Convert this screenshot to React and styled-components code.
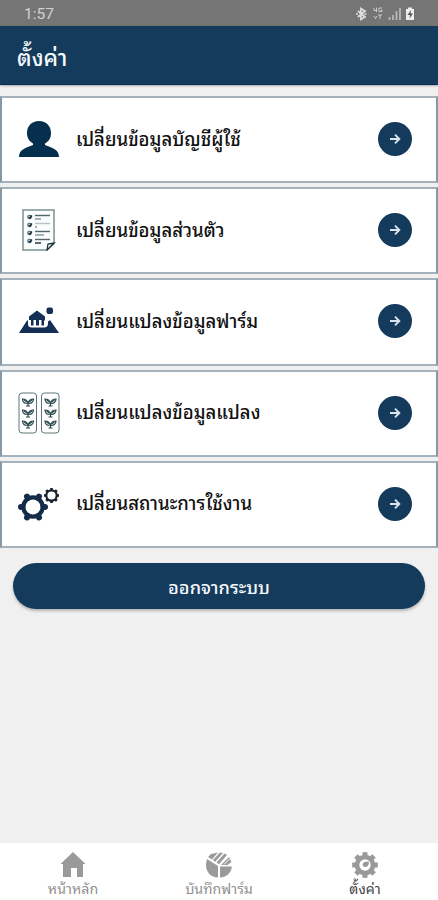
import React from 'react';
import styled, { createGlobalStyle } from 'styled-components';

const GlobalStyle = createGlobalStyle`
* {
    box-sizing: border-box;
}
body {
    margin: 0;
    background: #f0f0f0;
    font-family: Roboto, "Noto Sans Thai Looped", "Noto Looped Thai", Loma, Waree, Garuda, "Noto Sans Thai", "Noto Sans", sans-serif;
}
button {
    font-family: inherit;
    border: 0;
    padding: 0;
}
`

const UserIcon = () => (
    <svg width="42" height="42" viewBox="0 0 42 42" fill="#052f4d">
        <path d="M21 3C13.500 3 9 8 9 15c0 5 2 8 6 10.500v1.500C8 30 1 31 1 39h40c0-8-7-9-14-12v-1.500c4-2.500 6-5.500 6-10.500 0-7-4.500-12-12-12z" />
    </svg>
)

const ListIcon = () => (
    <svg width="42" height="42" viewBox="0 0 42 42" fill="none" stroke="#7b9292">
        <path d="M5 1h31v34l-7 6H5z" strokeWidth="1.5" fill="#fbfdfd" />
        <path d="M29 41l1-6 6-1z" fill="#fff" stroke="#173540" strokeWidth="1.3" />
        {[8, 16, 24, 32].map(y => (
            <g key={y}>
                <circle cx="11.500" cy={y} r="1.700" stroke="#566b76" strokeWidth="1.3" />
                <path d={`M11 ${y}l1 1 2-2.5`} stroke="#102c3e" strokeWidth="1.3" />
                <path d={`M17 ${y - 1.5}h15`} stroke={y === 16 ? '#b7c2c2' : '#52676b'} strokeWidth="1.4" />
                <path d={`M17 ${y + 2}h${y === 16 ? 2 : y === 24 ? 9 : 6}`} stroke={y === 32 ? '#102c3e' : '#7b9292'} strokeWidth="1.4" />
            </g>
        ))}
    </svg>
)

const FarmIcon = () => (
    <svg width="42" height="42" viewBox="0 0 42 42" fill="#142f56">
        <path d="M1 33l8-12.500h1v3.500q0 3.500 4 3.500h12q4 0 4-4v-2l2-1.500 9 13z" />
        <path d="M11 20v-3.500l8-6 8 6V20l-1 1v4.500h-2.500V20H21v5.500h-3V20h-2.500v5.500H13V20z" />
        <rect x="28.500" y="7.500" width="6.500" height="6.500" rx="2" />
    </svg>
)

const PlotIcon = () => (
    <svg width="42" height="42" viewBox="0 0 42 42" fill="none" stroke="#5c7477">
        {[1, 23.5].map(x => (
            <g key={x} transform={`translate(${x} 0)`}>
                <rect x="0" y="1" width="17.5" height="40" rx="3" />
                {[8, 19, 30].map(y => (
                    <g key={y} transform={`translate(9 ${y})`} stroke="#29484d" strokeWidth="1.2">
                        <path d="M0 6V3C-1 0-3-1-5.500-1c0 3 2 5 5.500 4C1 0 3-1 5.500-1 5.500 2 3 4 0 3M-2 6h4" />
                        <path d="M-4 0l3 2M4 0L1 2" />
                    </g>
                ))}
            </g>
        ))}
    </svg>
)

const teeth = (count) => Array.from({ length: count }, (_, i) => i * 360 / count)

const GearsIcon = () => (
    <svg width="42" height="42" viewBox="0 0 42 42" fill="none">
        <g transform="translate(15 24)" stroke="#132c49">
            <circle r="9.700" strokeWidth="4.200" />
            {teeth(6).map(a => <path key={a} d="M10.500 0h1.500" transform={`rotate(${a})`} strokeWidth="6" strokeLinecap="round" />)}
        </g>
        <g transform="translate(33.500 12.500)" stroke="#17222e">
            <circle r="5.200" strokeWidth="2.200" />
            {teeth(8).map(a => <path key={a} d="M5 0h2.500" transform={`rotate(${a})`} strokeWidth="2.600" />)}
        </g>
    </svg>
)

const ArrowIcon = () => (
    <svg width="12" height="12" viewBox="0 0 12 12" fill="none" stroke="#dce5ed" strokeWidth="1.9">
        <path d="M1 6h9M6 1.700L10.300 6 6 10.300" />
    </svg>
)

const StatusIcons = () => (
    <svg width="62" height="16" viewBox="0 0 62 16" fill="none" stroke="#dedede">
        <path d="M3 5l7 6-4 2.500v-11L10 5l-7 6" strokeWidth="1.8" />
        <path d="M1 8h2M9.500 8h2" strokeWidth="1.500" />
        <path d="M19 2v2.500h3M21.500 1.500V6M27 2h-3v3.500h3V4h-1M19 10l1.500 2.500L22 10M23 9h4M25 9v4" strokeWidth="1" opacity=".8" />
        <path d="M34.500 11v3M38 9v5M41.500 5v9M45 2v12" strokeWidth="1.700" opacity=".65" />
        <path d="M51 3h2V1.500h4V3h2v11h-8z" fill="#eee" stroke="none" />
        <path d="M56 4l-3.500 5H55l-.5 3.500L58 7.500h-2.500z" fill="#555" stroke="none" />
    </svg>
)

const HomeIcon = () => (
    <svg width="26" height="26" viewBox="0 0 26 26" fill="#9a9a9a">
        <path d="M13 0l12.500 12H23v13h-6v-9h-6v9H3V12H.5z" />
    </svg>
)

const FieldIcon = () => (
    <svg width="26" height="26" viewBox="0 0 26 26" fill="#9a9a9a">
        <path d="M1 7l11 7v11.500C5 25.500 0 20 0 13c0-2 .4-4 1-6zM14 14.500h11.800C25.500 21 20 25.500 14 25.500zM2 5l3-3 7-1.500-6 7zM7 8l7-7.500 3 .500-8 9zM10.500 10.500L18.500 1.500l2.500 1.500-8 9.300zM15 13l8-8 2.500 5-4 3z" />
        <path d="M18 12.500l6-6" stroke="#fff" />
    </svg>
)

const SettingsIcon = () => (
    <svg width="26" height="26" viewBox="-13 -13 26 26">
        <circle r="8" stroke="#999" strokeWidth="4.600" fill="#fff" />
        {teeth(8).map(a => <path key={a} d="M8 0h4.800" transform={`rotate(${a})`} stroke="#999" strokeWidth="5" />)}
        <path d="M4-3c-5-1-7 1-6 4 2 2 6 1 6-4z" fill="#999" />
    </svg>
)

const menu = [
    { title: 'เปลี่ยนข้อมูลบัญชีผู้ใช้', Icon: UserIcon },
    { title: 'เปลี่ยนข้อมูลส่วนตัว', Icon: ListIcon },
    { title: 'เปลี่ยนแปลงข้อมูลฟาร์ม', Icon: FarmIcon },
    { title: 'เปลี่ยนแปลงข้อมูลแปลง', Icon: PlotIcon },
    { title: 'เปลี่ยนสถานะการใช้งาน', Icon: GearsIcon },
]

const tabs = [
    { title: 'หน้าหลัก', Icon: HomeIcon },
    { title: 'บันทึกฟาร์ม', Icon: FieldIcon },
    { title: 'ตั้งค่า', Icon: SettingsIcon, active: true },
]

const App = () => {
    return (
        <>
        <GlobalStyle />
        <Screen>
            <StatusBar>
                <span>1:57</span>
                <StatusIcons />
            </StatusBar>
            <Header>
                <h1>ตั้งค่า</h1>
            </Header>
            <MenuList>
                {menu.map(({ title, Icon }) => (
                    <MenuRow key={title}>
                        <Icon />
                        <MenuTitle>{title}</MenuTitle>
                        <RoundButton aria-label={title}><ArrowIcon /></RoundButton>
                    </MenuRow>
                ))}
            </MenuList>
            <LogoutButton>ออกจากระบบ</LogoutButton>
            <TabBar>
                {tabs.map(({ title, Icon, active }) => (
                    <Tab key={title} $active={active}>
                        <Icon />
                        <span>{title}</span>
                    </Tab>
                ))}
            </TabBar>
        </Screen>
        </>
    )
}

const Screen = styled.div`
    display: flex;
    flex-direction: column;
    height: 900px;
    background: #f0f0f0;
    overflow: hidden;
`

const StatusBar = styled.div`
    display: flex;
    align-items: center;
    justify-content: space-between;
    flex: none;
    height: 26px;
    padding: 2px 21px 0 24px;
    background: #757575;
    color: #d2d2d2;
    font-size: 15.5px;
`

const Header = styled.header`
    display: flex;
    align-items: center;
    flex: none;
    height: 59px;
    padding: 5px 17px 0;
    background: #143a5c;
    border-bottom: 1px solid #092b4e;
    box-shadow: 0 1px 2px rgba(0, 0, 0, .3);
    color: #f4f8fb;

    h1 {
        margin: 0;
        font-size: 22.5px;
        line-height: 30px;
        font-weight: 500;
    }
`

const MenuList = styled.div`
    display: flex;
    flex-direction: column;
    gap: 4px;
    margin-top: 11px;
`

const MenuRow = styled.div`
    display: flex;
    align-items: center;
    height: 87.2px;
    padding: 0 24px 1px 16px;
    background: #fff;
    border: 2px solid #8798a5;
    border-top-color: #a6b2bb;
    border-bottom-color: #a6b2bb;
`

const MenuTitle = styled.span`
    flex: 1;
    margin-left: 16px;
    padding-top: 1px;
    color: #111;
    font-size: 18.5px;
    line-height: 28px;
    font-weight: 500;
    white-space: nowrap;
`

const RoundButton = styled.button`
    display: flex;
    align-items: center;
    justify-content: center;
    width: 34px;
    height: 34px;
    border-radius: 50%;
    background: #143a5c;
`

const LogoutButton = styled.button`
    flex: none;
    height: 46px;
    margin: 15px 13px 0;
    padding-bottom: 1px;
    border-radius: 23px;
    background: #143a5c;
    box-shadow: 0 2px 3px rgba(0, 0, 0, .25);
    color: #f4f8fb;
    font-size: 18.2px;
    font-weight: 500;
`

const TabBar = styled.nav`
    display: flex;
    flex: none;
    height: 57px;
    margin-top: auto;
    background: #fff;
`

const Tab = styled.div`
    display: flex;
    flex: 1;
    flex-direction: column;
    align-items: center;
    padding-top: 9px;
    color: ${props => props.$active ? '#444' : '#929292'};
    font-size: 14.2px;

    span {
        line-height: 22px;
        white-space: nowrap;
    }
`

export default App
